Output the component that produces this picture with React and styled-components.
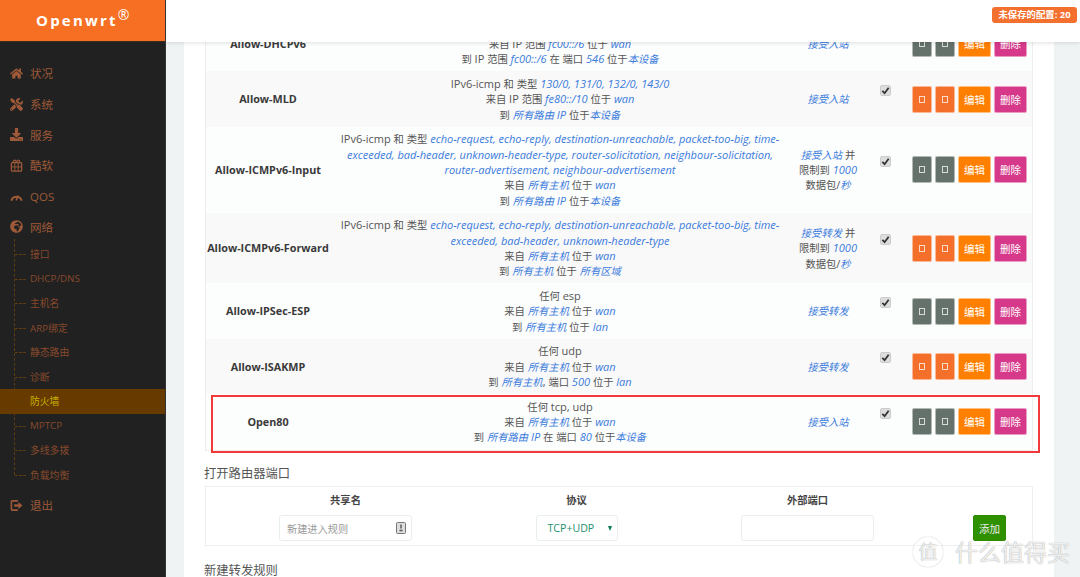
import React from 'react'
import styled, { createGlobalStyle } from 'styled-components'
import { FaHome, FaTools, FaDownload, FaGlobeAfrica } from 'react-icons/fa'

const FONT = `"Open Sans", "Noto Sans CJK SC", sans-serif`

const Global = createGlobalStyle`
  html, body { margin: 0; padding: 0; height: 100%; overflow: hidden; }
  body { font-family: ${FONT}; font-size: 11px; color: #444; background: #eff3f4; }
`

const Page = styled.div`
  display: grid;
  grid-template-columns: 166px 1fr;
  width: 1080px;
  height: 577px;
  overflow: hidden;
  position: relative;
`

const Sidebar = styled.aside`
  background: #212121;
  display: flex;
  flex-direction: column;
  border-right: 1px solid #333;
  box-sizing: border-box;
`
const Logo = styled.div`
  height: 42px;
  background: #f66f23;
  border-bottom: 1px solid #3a2a20;
  box-sizing: border-box;
  color: #fff;
  font-family: "Open Sans", sans-serif;
  font-weight: 700;
  font-size: 15px;
  line-height: 20px;
  letter-spacing: 2.2px;
  padding: 10px 0 0 36px;
  sup { font-size: 14px; font-weight: 400; line-height: 0; letter-spacing: 0; position: relative; top: 0; vertical-align: super; }
`
const Nav = styled.nav`
  padding-top: 16px;
  display: flex;
  flex-direction: column;
`
const NavItem = styled.div`
  height: 30.7px;
  display: flex;
  align-items: center;
  gap: 7px;
  padding-left: 10px;
  color: #9e5a38;
  font-size: 11.5px;
  svg { width: 13px; height: 13px; flex: none; }
`
const SubList = styled.div`
  position: relative;
  display: flex;
  flex-direction: column;
  margin-bottom: 3px;
  &::before {
    content: '';
    position: absolute;
    left: 14px;
    top: -3px;
    bottom: 12px;
    border-left: 1px dashed #5d3c10;
  }
`
const SubItem = styled.div`
  height: 24.5px;
  display: flex;
  align-items: center;
  padding-left: 30px;
  position: relative;
  font-size: 9.8px;
  color: ${p => (p.$active ? '#c9b400' : '#87492c')};
  background: ${p => (p.$active ? '#673a00' : 'transparent')};
  &::before {
    content: '';
    position: absolute;
    left: 15px;
    top: 12px;
    width: 11px;
    border-top: 1px dashed #5d3c10;
  }
`

const Main = styled.main`
  position: relative;
  height: 577px;
  overflow: hidden;
  display: flex;
  flex-direction: column;
`
const Header = styled.header`
  height: 42px;
  flex: none;
  background: #fff;
  box-shadow: 0 1px 4px rgba(0, 0, 0, 0.12);
  position: relative;
  z-index: 2;
  display: flex;
  justify-content: flex-end;
  padding: 7px 3px 0 0;
  box-sizing: border-box;
`
const Badge = styled.span`
  height: 16px;
  line-height: 16px;
  padding: 0 6.5px;
  background: #f3702e;
  color: #fff;
  border-radius: 3px;
  font-weight: 700;
  font-size: 9.4px;
`
const Panel = styled.div`
  margin: -26px 26px 0 18px;
  padding: 0 21px;
  background: #fff;
  flex: 1;
`
const Table = styled.div`
  border-left: 1px solid #eee;
  border-right: 1px solid #eee;
  width: 828px;
  box-sizing: border-box;
`
const Row = styled.div`
  display: grid;
  grid-template-columns: 124px 460px 76px 39px 1fr;
  align-items: center;
  position: relative;
  padding: 4.7px 0;
  line-height: 15.33px;
  text-align: center;
  background: ${p => (p.$alt ? '#f9f9f9' : '#fcfdfd')};
  border-bottom: ${p => (p.$last ? '1px solid #eee' : 'none')};
`
const Name = styled.div`
  font-weight: 700;
  color: #3a3a3a;
  font-size: 10.8px;
`
const Desc = styled.div`
  color: #555;
`
const Em = styled.em`
  color: #3a7bdc;
  font-style: italic;
`
// the CJK runs sit a little smaller than the latin text around them
const Cn = styled.span`
  font-size: 10.3px;
  line-height: 1;
`
const Verdict = styled.div`
  color: #555;
`
const CheckCell = styled.div`
  display: flex;
  justify-content: center;
  margin-bottom: 17px;
`
const Check = styled.span`
  width: 9px;
  height: 9px;
  background: #ddd;
  border: 1px solid #ccc;
  border-radius: 2px;
  display: flex;
  svg { width: 9px; height: 9px; }
`
const Actions = styled.div`
  display: flex;
  gap: 3px;
  padding-left: 7px;
`
const Btn = styled.button`
  height: 27px;
  padding: 0;
  border: 1px solid rgba(255, 255, 255, 0.5);
  border-radius: 2px;
  color: #fff;
  font-family: ${FONT};
  font-size: 10.5px;
  display: flex;
  align-items: center;
  justify-content: center;
  box-sizing: border-box;
  width: ${p => (p.$wide ? '33px' : '20px')};
  background: ${p => p.$bg};
`
const Tofu = styled.i`
  width: 4px;
  height: 5px;
  border: 1px solid rgba(255, 255, 255, 0.75);
  display: block;
`
const Annotation = styled.div`
  position: absolute;
  left: 5px;
  right: -8px;
  top: 1px;
  bottom: -3px;
  border: 2px solid #f33a3a;
  pointer-events: none;
`
const Title = styled.h3`
  margin: 14px 0 3px -1px;
  font-weight: 400;
  font-size: 12.3px;
  line-height: 18px;
  color: #555;
`
const AddBox = styled.div`
  width: 828px;
  height: 60px;
  margin-bottom: 16px;
  box-sizing: border-box;
  border: 1px solid #eee;
  padding-left: 24px;
  display: grid;
  grid-template-columns: 231px 231px 231px 1fr;
  grid-template-rows: 25px 1fr;
  justify-items: center;
  align-items: center;
`
const Head = styled.div`
  font-weight: 700;
  font-size: 10.3px;
  color: #444;
`
const InputBox = styled.div`
  width: 133px;
  height: 26px;
  box-sizing: border-box;
  border: 1px solid #e8eeee;
  border-radius: 3px;
  background: #fff;
  display: flex;
  align-items: center;
  justify-content: space-between;
  padding: 0 5px 0 7px;
  color: #999;
  font-size: 10.2px;
  svg { width: 10px; height: 12px; }
`
const SelectBox = styled(InputBox)`
  width: 82px;
  color: #1f8f6f;
  font-size: 10.6px;
  padding: 0 5px 0 11px;
`
const Caret = styled.span`
  border-left: 2.5px solid transparent;
  border-right: 2.5px solid transparent;
  border-top: 5px solid #0f7a5c;
`
const AddCell = styled.div`
  padding-left: 24px;
`
const AddBtn = styled.button`
  width: 33px;
  height: 26px;
  border: 1px solid #2b8a00;
  border-radius: 2px;
  background: #2f9000;
  color: #eee;
  font-family: ${FONT};
  font-size: 10.5px;
  padding: 0;
`
const Watermark = styled.div`
  position: absolute;
  right: 10px;
  bottom: 10px;
  display: flex;
  align-items: center;
  gap: 12px;
  color: rgba(255, 255, 255, 0.85);
  text-shadow: 0 0 1px #888;
  font-size: 23px;
  line-height: 30px;
  z-index: 3;
`
const WmMark = styled.span`
  width: 26px;
  height: 26px;
  border: 2px solid rgba(255, 255, 255, 0.85);
  box-shadow: 0 0 1px #888;
  border-radius: 50%;
  font-size: 19px;
  display: flex;
  align-items: center;
  justify-content: center;
  line-height: 1;
`

const BoxIcon = () => (
  <svg viewBox="0 0 14 14" fill="none" stroke="currentColor">
    <rect x="1.5" y="4" width="11" height="9" rx="1" strokeWidth="1.4" />
    <path d="M1.5 8.5h11M5.2 4v9M8.8 4v9" strokeWidth="1" />
    <path d="M3.5 3.5c0-3 3-3 3 0M7.5 3.5c0-3 3-3 3 0" strokeWidth="1.3" />
  </svg>
)
const GaugeIcon = () => (
  <svg viewBox="0 0 14 14" fill="none" stroke="currentColor">
    <path d="M1.5 11.5a5.7 5.7 0 0 1 11 0" strokeWidth="2.1" />
    <path d="M6.6 11.2 9 6" strokeWidth="1.6" />
  </svg>
)
const ExitIcon = () => (
  <svg viewBox="0 0 14 14" fill="none" stroke="currentColor">
    <path d="M8.5 2H2.5a1 1 0 0 0-1 1v8a1 1 0 0 0 1 1h6" strokeWidth="1.7" />
    <path d="M4.5 7h5" strokeWidth="2.6" />
    <path d="M9 3.2 13.4 7 9 10.8z" fill="currentColor" stroke="none" />
  </svg>
)

const TOP = [
  { label: '状况', icon: <FaHome /> },
  { label: '系统', icon: <FaTools /> },
  { label: '服务', icon: <FaDownload /> },
  { label: '酷软', icon: <BoxIcon /> },
  { label: 'QOS', icon: <GaugeIcon /> },
  { label: '网络', icon: <FaGlobeAfrica /> },
]
const SUB = ['接口', 'DHCP/DNS', '主机名', 'ARP绑定', '静态路由', '诊断', '防火墙', 'MPTCP', '多线多拨', '负载均衡']

const RULES = [
  {
    name: 'Allow-DHCPv6', verdict: ['*接受入站*'],
    desc: ['任何 udp', '来自 IP 范围 *fc00::/6* 位于 *wan*', '到 IP 范围 *fc00::/6* 在 端口 *546* 位于*本设备*'],
  },
  {
    name: 'Allow-MLD', alt: true, verdict: ['*接受入站*'],
    desc: ['IPv6-icmp 和 类型 *130/0, 131/0, 132/0, 143/0*', '来自 IP 范围 *fe80::/10* 位于 *wan*', '到 *所有路由 IP* 位于*本设备*'],
  },
  {
    name: 'Allow-ICMPv6-Input', verdict: ['*接受入站* 并', '限制到 *1000*', '数据包/*秒*'],
    desc: [
      'IPv6-icmp 和 类型 *echo-request, echo-reply, destination-unreachable, packet-too-big, time-exceeded, bad-header, unknown-header-type, router-solicitation, neighbour-solicitation, router-advertisement, neighbour-advertisement*',
      '来自 *所有主机* 位于 *wan*',
      '到 *所有路由 IP* 位于*本设备*',
    ],
  },
  {
    name: 'Allow-ICMPv6-Forward', alt: true, verdict: ['*接受转发* 并', '限制到 *1000*', '数据包/*秒*'],
    desc: [
      'IPv6-icmp 和 类型 *echo-request, echo-reply, destination-unreachable, packet-too-big, time-exceeded, bad-header, unknown-header-type*',
      '来自 *所有主机* 位于 *wan*',
      '到 *所有主机* 位于 *所有区域*',
    ],
  },
  {
    name: 'Allow-IPSec-ESP', verdict: ['*接受转发*'],
    desc: ['任何 esp', '来自 *所有主机* 位于 *wan*', '到 *所有主机* 位于 *lan*'],
  },
  {
    name: 'Allow-ISAKMP', alt: true, verdict: ['*接受转发*'],
    desc: ['任何 udp', '来自 *所有主机* 位于 *wan*', '到 *所有主机*, 端口 *500* 位于 *lan*'],
  },
  {
    name: 'Open80', last: true, verdict: ['*接受入站*'],
    desc: ['任何 tcp, udp', '来自 *所有主机* 位于 *wan*', '到 *所有路由 IP* 在 端口 *80* 位于*本设备*'],
  },
]

const runs = text =>
  text.split(/([\u4e00-\u9fff]+)/).map((part, i) => (i % 2 ? <Cn key={i}>{part}</Cn> : part))

// lines are plain strings, *...* marks the highlighted values
const Lines = ({ lines }) =>
  lines.map((line, n) => (
    <div key={n}>
      {line.split('*').map((part, i) => (i % 2 ? <Em key={i}>{runs(part)}</Em> : <span key={i}>{runs(part)}</span>))}
    </div>
  ))

function Rule({ rule }) {
  const toggle = rule.alt ? '#f4702a' : '#65726b'
  return (
    <Row $alt={rule.alt} $last={rule.last}>
      <Name>{rule.name}</Name>
      <Desc><Lines lines={rule.desc} /></Desc>
      <Verdict><Lines lines={rule.verdict} /></Verdict>
      <CheckCell>
        <Check>
          <svg viewBox="0 0 10 10"><path d="M1.5 5.5 4 8l4.5-6" fill="none" stroke="#333" strokeWidth="2" /></svg>
        </Check>
      </CheckCell>
      <Actions>
        <Btn $bg={toggle}><Tofu /></Btn>
        <Btn $bg={toggle}><Tofu /></Btn>
        <Btn $wide $bg="#ff7f00">编辑</Btn>
        <Btn $wide $bg="#d6398a">删除</Btn>
      </Actions>
      {rule.last && <Annotation />}
    </Row>
  )
}

export default function App() {
  return (
    <Page>
      <Global />
      <Sidebar>
        <Logo>Openwrt<sup>®</sup></Logo>
        <Nav>
          {TOP.map(item => <NavItem key={item.label}>{item.icon}{item.label}</NavItem>)}
          <SubList>
            {SUB.map(label => <SubItem key={label} $active={label === '防火墙'}>{label}</SubItem>)}
          </SubList>
          <NavItem><ExitIcon />退出</NavItem>
        </Nav>
      </Sidebar>
      <Main>
        <Header>
          <Badge>未保存的配置: 20</Badge>
        </Header>
        <Panel>
          <Table>
            {RULES.map(rule => <Rule key={rule.name} rule={rule} />)}
          </Table>
          <Title>打开路由器端口</Title>
          <AddBox>
            <Head>共享名</Head>
            <Head>协议</Head>
            <Head>外部端口</Head>
            <span />
            <InputBox>
              新建进入规则
              <svg viewBox="0 0 10 12">
                <rect x="0.5" y="0.5" width="9" height="11" rx="1" fill="#ddd" stroke="#777" />
                <path d="M5 2.5v4M3.5 8.5h3" stroke="#555" strokeWidth="1.4" />
              </svg>
            </InputBox>
            <SelectBox>TCP+UDP<Caret /></SelectBox>
            <InputBox />
            <AddCell><AddBtn>添加</AddBtn></AddCell>
          </AddBox>
          <Title>新建转发规则</Title>
        </Panel>
        <Watermark><WmMark>值</WmMark>什么值得买</Watermark>
      </Main>
    </Page>
  )
}
